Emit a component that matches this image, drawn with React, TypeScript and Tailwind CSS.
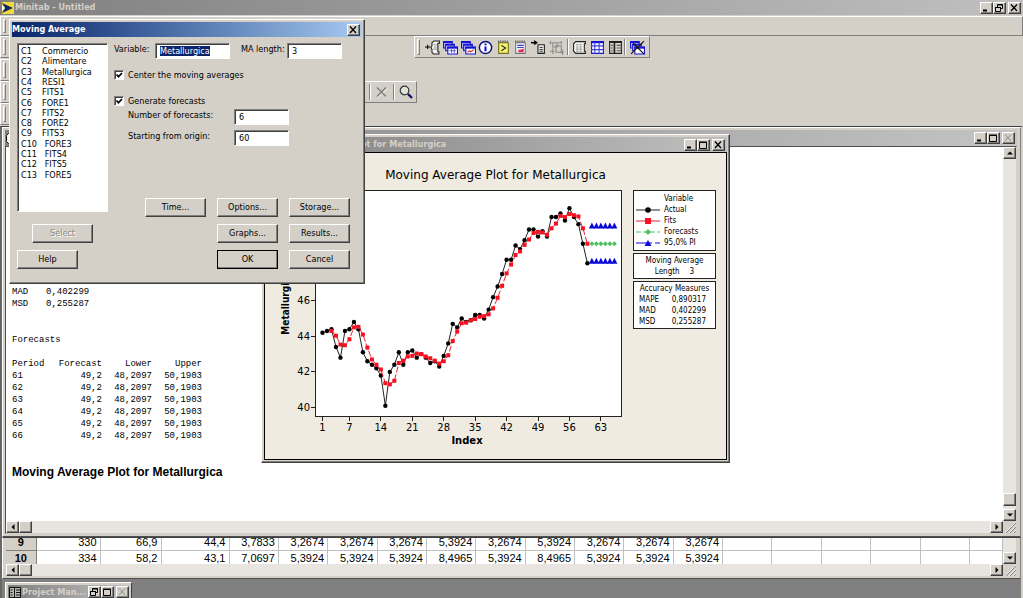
import React, { useEffect, useRef } from "react";

const raised =
  "border border-t-white border-l-white border-r-[#404040] border-b-[#404040] bg-[#d4d0c8] shadow-[inset_-1px_-1px_0_#808080]";
const sunken =
  "border border-t-[#808080] border-l-[#808080] border-r-white border-b-white bg-white shadow-[inset_1px_1px_0_#404040]";

/* ---------- window chrome ---------- */

type Glyph = "min" | "max" | "restore" | "close";

function CaptionButton({ kind, disabled = false }: { kind: Glyph; disabled?: boolean }) {
  const c = disabled ? "#8a8a86" : "#000";
  return (
    <button
      type="button"
      aria-label={kind}
      disabled={disabled}
      className={`flex h-3 w-[13px] shrink-0 items-center justify-center ${raised}`}
    >
      <svg width="9" height="8" viewBox="0 0 9 8" fill="none" stroke={c}>
        {kind === "min" && <path d="M1 6.5h4" strokeWidth="2" />}
        {kind === "max" && <path d="M.5 1.5h7v6h-7zM0 1h8" />}
        {kind === "restore" && <path d="M2.5 3V.5h5v4H6M2 1h6M.5 3.5h5v4h-5zM0 3.5h6" />}
        {kind === "close" && <path d="M1 .5l6 6.5M7 .5L1 7" strokeWidth={disabled ? 1 : 1.3} />}
      </svg>
    </button>
  );
}

function CaptionButtons({ kinds, disabledClose = false }: { kinds: Glyph[]; disabledClose?: boolean }) {
  return (
    <div className="ml-auto flex items-center">
      {kinds.map((k) => (
        <div key={k} className={k === "close" ? "ml-0.5" : ""}>
          <CaptionButton kind={k} disabled={k === "close" && disabledClose} />
        </div>
      ))}
    </div>
  );
}

const arrows = {
  up: "M0 4.5h6L3 1.5z",
  down: "M0 1.5h6L3 4.5z",
  left: "M4.5 0v6L1.5 3z",
  right: "M1.5 0v6L4.5 3z",
};

function ScrollButton({ dir }: { dir: keyof typeof arrows }) {
  return (
    <button
      type="button"
      aria-label={`Scroll ${dir}`}
      className={`flex h-3 w-[13px] shrink-0 items-center justify-center ${raised}`}
    >
      <svg width="6" height="6" viewBox="0 0 6 6">
        <path d={arrows[dir]} />
      </svg>
    </button>
  );
}

function HorizontalScroll() {
  return (
    <div className="flex h-3 shrink-0 bg-[#e8e5e0]">
      <ScrollButton dir="left" />
      <div className={`h-3 w-[13px] ${raised}`} />
      <div className="flex-1" />
      <ScrollButton dir="right" />
      <svg className="w-[13px] shrink-0 bg-[#d4d0c8]" height="12" viewBox="0 0 13 12" fill="none">
        <path d="M3 12L13 2M7 12l6-6M11 12l2-2" stroke="#808080" />
        <path d="M2 12L13 1M6 12l7-7M10 12l3-3" stroke="#fff" strokeWidth=".7" />
      </svg>
    </div>
  );
}

/* ---------- toolbars ---------- */

function Grip() {
  return (
    <div className="my-0.5 w-[3px] shrink-0 border border-t-white border-l-white border-r-[#808080] border-b-[#808080]" />
  );
}

function Divider() {
  return <div className="my-0.5 w-0.5 border-l border-l-[#808080] border-r border-r-white" />;
}

function Tool({ label, children }: { label: string; children: React.ReactNode }) {
  return (
    <button type="button" aria-label={label} className="flex flex-1 items-center justify-center">
      <svg width="15" height="15" viewBox="0 0 14 14" fill="none" stroke="#222">
        {children}
      </svg>
    </button>
  );
}

const stack = (
  <>
    <path d="M.5 1.5h8v6h-8z" fill="#b8b8f0" stroke="#1414d0" />
    <path d="M0 2h9" stroke="#1414d0" strokeWidth="1.6" />
    <path d="M2.5 4h8v6h-8z" fill="#c8c8f4" stroke="#1414d0" />
    <path d="M2 4.500h9" stroke="#1414d0" strokeWidth="1.6" />
    <path d="M4.5 6.500h9v6.500h-9z" fill="#fff" stroke="#1414d0" />
    <path d="M4 7.200h10" stroke="#1414d0" strokeWidth="1.8" />
  </>
);

function MainTools() {
  return (
    <div className="ml-[74px] flex border border-t-white border-l-white border-r-[#808080] border-b-[#808080] pl-0.5 pr-0.5">
      <Grip />
      <div className="ml-1 flex w-[141px]">
        <Tool label="Session folder">
          <path d="M0 6.5h5M2.5 4.5v4" stroke="#000" />
          <path d="M6.5 2.5l2-1.5h5v2H12v8h1v2H8l-1.5-1.5v-3L5.5 7l1-1.5z" fill="#f4f4f0" stroke="#222" />
          <path d="M8 4.5h3M8 6.5h3M8 8.5h3" stroke="#999" />
        </Tool>
        <Tool label="Worksheets folder">
          {stack}
          <path d="M6 10h6M8 8.5V12M10.500 8.5V12" stroke="#1414d0" strokeWidth=".6" />
        </Tool>
        <Tool label="Graphs folder">
          {stack}
          <path d="M6 11.5l2-1.5 1 1 3-2" stroke="#d02020" />
        </Tool>
        <Tool label="Info">
          <circle cx="7" cy="7" r="5.7" fill="#fff" stroke="#10107a" strokeWidth="1.4" />
          <path d="M7 6v4.5M7 3.2v1.7" stroke="#1414e0" strokeWidth="2" />
        </Tool>
        <Tool label="History">
          <path d="M2.5 2.5h9v10h-9z" fill="#f4f470" stroke="#70701a" />
          <path d="M2 1.5h10" stroke="#555" strokeDasharray="1 1" strokeWidth="2" />
          <path d="M5 5l4 2.5L5 10" stroke="#222" />
        </Tool>
        <Tool label="Report pad">
          <path d="M2.5 2.5h9v10h-9z" fill="#f0f0f8" stroke="#777" />
          <path d="M2 1.5h10" stroke="#555" strokeDasharray="1 1" strokeWidth="2" />
          <path d="M4 5h6M4 7h6" stroke="#4040c0" />
          <path d="M5 11.500V9h2l3-1v3.500z" fill="#e03050" stroke="none" />
        </Tool>
        <Tool label="Related documents">
          <path d="M0 2.5h4" stroke="#000" strokeWidth="1.5" />
          <path d="M3 0l3.500 2.500L3 5z" fill="#000" stroke="none" />
          <path d="M6.5 4.5h6v8h-6z" fill="#e8e8e8" stroke="#222" />
          <path d="M8 7h3M8 9h3M8 11h3" stroke="#444" />
        </Tool>
        <Tool label="Design">
          <g stroke="#8a8a86">
            <path d="M3.5 2.500h4v4h-4zM6.500 5.500h5v6h-5z" />
            <path d="M.5 2.500h2M1.500 1v3M8 2.500h4M11.500 1v3M1 10.500h4M3.500 8v5M10 11.500h4M12.500 9v5" />
          </g>
        </Tool>
      </div>
      <div className="ml-0.5 flex">
        <Divider />
        <div className="ml-0.5 flex w-[53px]">
          <Tool label="Session window">
            <path d="M3.5 1.5h9v2h-1v7h1v2h-9l-2-2v-7z" fill="#f4f4f0" stroke="#222" />
            <path d="M4 4.5h6M4 6.5h6M4 8.5h6M4 10.5h6" stroke="#777" strokeDasharray="2 1" />
          </Tool>
          <Tool label="Worksheet window">
            <path d="M1.5 1.5h11v11h-11z" fill="#fff" stroke="#1414d0" />
            <path d="M1 2h12" stroke="#1414d0" strokeWidth="2" />
            <path d="M1 5.5h12M1 9h12M4.5 2v11M8.5 2v11" stroke="#3a3ae0" />
          </Tool>
          <Tool label="Project manager">
            <path d="M1.5 1.5h11v11h-11z" fill="#d8d8d0" stroke="#222" />
            <path d="M1 2h12M6 2v11" stroke="#222" strokeWidth="1.6" />
            <path d="M2.5 5h2M2.5 7.5h2M2.5 10h2M8 5h4M8 7.5h4M8 10h4" stroke="#555" />
          </Tool>
        </div>
      </div>
      <div className="flex">
        <Divider />
        <div className="ml-px flex w-[20px]">
          <Tool label="Close all graphs">
            {stack}
            <path d="M1 13L13 1M3 3l10 10" stroke="#111" strokeWidth="1.1" />
          </Tool>
        </div>
      </div>
    </div>
  );
}

const dock = "flex h-full border border-t-white border-l-white border-r-[#808080] border-b-[#808080] pl-0.5";

function ToolbarArea() {
  return (
    <div className="flex h-[90px] shrink-0 flex-col">
      <div className="flex h-[22px]">
        <div className={`${dock} w-[340px]`}>
          <Grip />
        </div>
        <MainTools />
      </div>
      <div className="h-[23px] pt-px">
        <div className={`${dock} w-[340px]`}>
          <Grip />
        </div>
      </div>
      <div className="h-[22px]">
        <div className={`${dock} w-[417px]`}>
          <Grip />
          <div className="ml-auto flex">
            <Divider />
            <button type="button" aria-label="Delete" className="flex w-[22px] items-center justify-center">
              <svg width="12" height="11" viewBox="0 0 12 11" fill="none">
                <path d="M2 1.5l9 9M11 1.5l-9 9" stroke="#fff" />
                <path d="M1 .5l9 9M10 .5l-9 9" stroke="#77756f" strokeWidth="1.2" />
              </svg>
            </button>
            <Divider />
            <button type="button" aria-label="Find" className="flex w-[21px] items-center justify-center">
              <svg width="14" height="14" viewBox="0 0 14 14" fill="none">
                <circle cx="5.5" cy="5.5" r="4.3" fill="#dfe3da" stroke="#333" strokeWidth="1.2" />
                <path d="M9 9l4 4" stroke="#10106a" strokeWidth="2.4" />
              </svg>
            </button>
          </div>
        </div>
      </div>
      <div className="h-[22px]">
        <div className={`${dock} w-[340px]`}>
          <Grip />
        </div>
      </div>
    </div>
  );
}

/* ---------- session window ---------- */

const forecasts = [61, 62, 63, 64, 65, 66];

function SessionWindow() {
  return (
    <section className="flex min-h-0 flex-1 flex-col border border-t-white border-l-white border-r-[#808080] border-b-[#505050] bg-[#d4d0c8] p-0.5 pr-[3px]">
      <header className="flex h-4 shrink-0 items-center bg-linear-to-r from-[#808080] to-[#c4c4c4] pr-0.5">
        <svg width="13" height="13" viewBox="0 0 13 13" fill="none" stroke="#111">
          <path d="M3.5 1.5h7v10h-7l-2-2v-6z" fill="#f4f4f0" />
        </svg>
        <CaptionButtons kinds={["min", "max", "close"]} disabledClose />
      </header>
      <div className="flex min-h-0 flex-1 flex-col border border-t-[#505050] border-l-[#505050] border-r-transparent border-b-transparent">
        <div className="flex min-h-0 flex-1 bg-white">
          <div className="min-w-0 flex-1 overflow-hidden pl-1.5 pt-[139px] font-['Liberation_Mono',monospace] text-[9px] leading-3 text-black">
            <dl className="grid grid-cols-[34px_1fr]">
              <dt>MAD</dt>
              <dd>0,402299</dd>
              <dt>MSD</dt>
              <dd>0,255287</dd>
            </dl>
            <h3 className="mt-6">Forecasts</h3>
            <table className="mt-3 w-[190px] table-fixed text-right">
              <thead>
                <tr>
                  <th className="w-10 p-0 text-left font-normal">Period</th>
                  <th className="w-[50px] p-0 font-normal">Forecast</th>
                  <th className="w-[50px] p-0 font-normal">Lower</th>
                  <th className="w-[50px] p-0 font-normal">Upper</th>
                </tr>
              </thead>
              <tbody>
                {forecasts.map((p) => (
                  <tr key={p}>
                    <td className="p-0 text-left">{p}</td>
                    <td className="p-0">49,2</td>
                    <td className="p-0">48,2097</td>
                    <td className="p-0">50,1903</td>
                  </tr>
                ))}
              </tbody>
            </table>
            <h2 className="mt-6 font-['Liberation_Sans',sans-serif] text-[12px] font-bold">
              Moving Average Plot for Metallurgica
            </h2>
          </div>
          <div className="flex w-[13px] shrink-0 flex-col bg-[#e8e5e0]">
            <ScrollButton dir="up" />
            <div className="flex-1" />
            <div className={`mb-[3px] h-[13px] ${raised}`} />
            <ScrollButton dir="down" />
          </div>
        </div>
        <HorizontalScroll />
      </div>
    </section>
  );
}

/* ---------- worksheet ---------- */

const sheet = [
  { n: 9, cells: ["330", "66,9", "44,4", "3,7833", "3,2674", "3,2674", "3,2674", "5,3924", "3,2674", "5,3924", "3,2674", "3,2674", "3,2674"] },
  { n: 10, cells: ["334", "58,2", "43,1", "7,0697", "5,3924", "5,3924", "5,3924", "8,4965", "5,3924", "8,4965", "5,3924", "5,3924", "5,3924"] },
];
const blanks = [0, 1, 2, 3, 4, 5];

function WorksheetWindow() {
  return (
    <section className="flex h-[42px] shrink-0 flex-col border border-t-[#404040] border-l-white border-r-[#808080] border-b-[#505050] bg-[#d4d0c8] pb-0.5 pl-[3px] pr-1">
      <div className="flex min-h-0 flex-1 bg-white">
        <div className="flex min-w-0 flex-1 items-center overflow-hidden">
          <table className="w-full table-fixed border-collapse font-['Liberation_Sans',sans-serif] text-[11px] leading-[15px] text-black">
            <colgroup>
              <col className="w-[30px]" />
              <col className="w-16" />
              <col className="w-[61px]" />
              <col className="w-[68px]" />
              <col span={15} />
              <col className="w-[33px]" />
            </colgroup>
            <tbody>
              {sheet.map((r) => (
                <tr key={r.n}>
                  <th className="border-b border-r border-[#808080] bg-[#d4d0c8] p-0 text-center font-bold">{r.n}</th>
                  {r.cells.map((c, i) => (
                    <td key={i} className="border-b border-r border-[#c0c0c0] p-0 pr-[3px] text-right">
                      {c}
                    </td>
                  ))}
                  {blanks.map((b) => (
                    <td key={b} className="border-b border-r border-[#c0c0c0] p-0" />
                  ))}
                </tr>
              ))}
            </tbody>
          </table>
        </div>
        <div className="flex w-[13px] shrink-0 flex-col justify-end bg-[#e8e5e0]">
          <ScrollButton dir="down" />
        </div>
      </div>
      <HorizontalScroll />
    </section>
  );
}

/* ---------- graph window ---------- */

const actual = [
  44.2, 44.3, 44.4, 43.4, 42.8, 44.3, 44.4, 44.8, 44.4, 43.1, 42.6, 42.4, 42.2, 41.8, 40.1, 42.0, 42.4, 43.1, 42.4, 43.1,
  43.2, 42.8, 43.0, 42.8, 42.5, 42.6, 42.3, 42.9, 43.6, 44.7, 44.5, 45.0, 44.8, 44.9, 45.2, 45.2, 45.0, 45.5, 46.2, 46.8,
  47.5, 48.3, 48.3, 49.1, 48.9, 49.4, 50.0, 50.0, 49.6, 49.9, 49.6, 50.7, 50.7, 50.9, 50.5, 51.2, 50.7, 50.3, 49.2, 48.1,
];
const fits = actual.slice(2).map((v, i) => ({ t: i + 3, v: (v + actual[i + 1] + actual[i]) / 3 }));

const px = (t: number) => 45.5 + (t - 1) * 4.49;
const py = (v: number) => 220.5 - (v - 40) * 17.8;

function Plot() {
  return (
    <svg
      width="348"
      height="263"
      viewBox="0 0 348 263"
      className="shrink-0 font-['DejaVu_Sans',sans-serif] text-[10px]"
      role="img"
      aria-label="Metallurgica by index"
    >
      <rect x="38.5" y="3.5" width="306" height="226" fill="#fff" stroke="#222" />
      {[40, 42, 44, 46].map((v) => (
        <g key={v}>
          <path d={`M34 ${Math.floor(py(v)) + 0.5}h4`} stroke="#222" />
          <text x="33" y={Math.floor(py(v)) + 4} textAnchor="end">
            {v}
          </text>
        </g>
      ))}
      {[1, 7, 14, 21, 28, 35, 42, 49, 56, 63].map((t) => (
        <g key={t}>
          <path d={`M${Math.floor(px(t)) + 0.5} 230v4`} stroke="#222" />
          <text x={px(t)} y="244" textAnchor="middle">
            {t}
          </text>
        </g>
      ))}
      <text x="190" y="257" textAnchor="middle" className="font-['DejaVu_Sans',sans-serif] font-bold">
        Index
      </text>
      <text
        transform="translate(12 116) rotate(-90)"
        textAnchor="middle"
        className="font-['DejaVu_Sans_Condensed',sans-serif] font-bold"
      >
        Metallurgica
      </text>
      <polyline points={actual.map((v, i) => `${px(i + 1)},${py(v)}`).join(" ")} fill="none" stroke="#222" />
      {actual.map((v, i) => (
        <circle key={i} cx={px(i + 1)} cy={py(v)} r="2.2" />
      ))}
      <polyline
        points={fits.map((f) => `${px(f.t)},${py(f.v)}`).join(" ")}
        fill="none"
        stroke="#e8203a"
        strokeDasharray="6 2"
      />
      {fits.map((f) => (
        <rect key={f.t} x={px(f.t) - 2} y={py(f.v) - 2} width="4" height="4" fill="#f81020" />
      ))}
      {forecasts.map((t) => (
        <g key={t}>
          <path d={`M${px(t)} ${py(49.2) - 2.5}l2.5 2.5l-2.5 2.5l-2.5-2.5z`} fill="#4fc060" />
          <path d={`M${px(t) - 3} ${py(50.19) + 2.5}h6l-3-6z`} fill="#0808d8" />
          <path d={`M${px(t) - 3} ${py(48.21) + 2.5}h6l-3-6z`} fill="#0808d8" />
        </g>
      ))}
    </svg>
  );
}

const legend = [
  { name: "Actual", color: "#222", dash: "", mark: <circle cx="12" cy="5" r="2.8" fill="#000" /> },
  { name: "Fits", color: "#e8203a", dash: "", mark: <rect x="9" y="2" width="6" height="6" fill="#f81020" /> },
  { name: "Forecasts", color: "#4fc060", dash: "5 2", mark: <path d="M12 2l3 3l-3 3l-3-3z" fill="#4fc060" /> },
  { name: "95,0% PI", color: "#0808d8", dash: "16 3", mark: <path d="M8.5 8h7L12 2z" fill="#0808d8" /> },
];

function GraphWindow() {
  return (
    <section className="absolute left-[261px] top-[134px] w-[469px] border border-t-white border-l-white border-r-[#404040] border-b-[#404040] bg-[#d4d0c8] p-0.5 shadow-[inset_-1px_-1px_0_#808080]">
      <header className="flex h-[15px] items-center bg-linear-to-r from-[#808080] to-[#c0c0c0] pr-0.5 font-bold text-[#d4d0c8]">
        <svg width="12" height="11" viewBox="0 0 12 11" fill="none" stroke="#1414d0">
          <path d="M.5.5h10v9H.5z" fill="#fff" />
        </svg>
        <h2>Moving Average Plot for Metallurgica</h2>
        <CaptionButtons kinds={["min", "max", "close"]} />
      </header>
      <div className="border border-black bg-[#efebe0] pb-[9px] pl-3 pt-4 text-black">
        <h3 className="pr-3 text-center font-['DejaVu_Sans',sans-serif] text-[12px] leading-[13px]">
          Moving Average Plot for Metallurgica
        </h3>
        <div className="mt-[5px] flex gap-2">
          <Plot />
          <div className="flex w-[83px] flex-col gap-0.5 pt-[3px] text-[8px] leading-[11px]">
            <div className="border border-[#222] bg-white py-0.5 pl-0.5">
              <div className="pl-7">Variable</div>
              {legend.map((l) => (
                <div key={l.name} className="flex items-center gap-1">
                  <svg width="24" height="10" viewBox="0 0 24 10" fill="none">
                    <path d="M0 5h24" stroke={l.color} strokeDasharray={l.dash} />
                    {l.mark}
                  </svg>
                  {l.name}
                </div>
              ))}
            </div>
            <div className="border border-[#222] bg-white py-px text-center">
              <div>Moving Average</div>
              <div className="flex justify-center gap-2.5">
                <span>Length</span>
                <span>3</span>
              </div>
            </div>
            <div className="border border-[#222] bg-white px-[5px] py-px">
              <div className="whitespace-nowrap text-center">Accuracy Measures</div>
              {[
                ["MAPE", "0,890317"],
                ["MAD", "0,402299"],
                ["MSD", "0,255287"],
              ].map(([k, v]) => (
                <div key={k} className="flex justify-between pr-1">
                  <span>{k}</span>
                  <span>{v}</span>
                </div>
              ))}
            </div>
          </div>
        </div>
      </div>
    </section>
  );
}

/* ---------- dialog ---------- */

const columns = [
  "C1    Commercio",
  "C2    Alimentare",
  "C3    Metallurgica",
  "C4    RESI1",
  "C5    FITS1",
  "C6    FORE1",
  "C7    FITS2",
  "C8    FORE2",
  "C9    FITS3",
  "C10   FORE3",
  "C11   FITS4",
  "C12   FITS5",
  "C13   FORE5",
];

function DialogButton({ label, primary = false, disabled = false }: { label: string; primary?: boolean; disabled?: boolean }) {
  return (
    <button
      type="button"
      disabled={disabled}
      className={`h-[19px] w-[61px] ${raised} ${primary ? "outline-1 -outline-offset-1 outline-black" : ""} ${
        disabled ? "text-[#8a8a86] [text-shadow:1px_1px_0_#fff]" : ""
      }`}
    >
      {label}
    </button>
  );
}

function Check({ id, label }: { id: string; label: string }) {
  return (
    <div className="flex h-2.5 items-center gap-1">
      <span className="grid">
        <input
          id={id}
          type="checkbox"
          defaultChecked
          className={`peer col-start-1 row-start-1 size-2.5 appearance-none ${sunken}`}
        />
        <svg
          className="pointer-events-none col-start-1 row-start-1 hidden peer-checked:block"
          width="10"
          height="10"
          viewBox="0 0 10 10"
          fill="none"
        >
          <path d="M2.5 4.5l2 2.2L8 3" stroke="#000" strokeWidth="1.7" />
        </svg>
      </span>
      <label htmlFor={id}>{label}</label>
    </div>
  );
}

const field = `h-4 px-1 outline-none selection:bg-[#0a246a] selection:text-white ${sunken}`;

function MovingAverageDialog() {
  const variable = useRef<HTMLInputElement>(null);
  useEffect(() => {
    variable.current?.focus();
    variable.current?.select();
  }, []);

  return (
    <div
      role="dialog"
      aria-label="Moving Average"
      className="absolute left-[9px] top-[19px] w-[356px] border border-t-white border-l-white border-r-[#404040] border-b-[#404040] bg-[#d4d0c8] p-0.5 text-black shadow-[inset_-1px_-1px_0_#808080]"
    >
      <header className="flex h-[15px] items-center bg-linear-to-r from-[#0a246a] to-[#a6caf0] pr-0.5 font-bold text-white">
        <h2>Moving Average</h2>
        <CaptionButtons kinds={["close"]} />
      </header>
      <form className="flex flex-col pb-3 pl-[5px] pr-3 pt-1.5" onSubmit={(e) => e.preventDefault()}>
        <div className="flex gap-1.5">
          <ul role="listbox" aria-label="Columns" className={`grid h-[169px] w-[91px] shrink-0 auto-rows-fr pb-[31px] pl-[3px] pt-0.5 ${sunken}`}>
            {columns.map((c) => (
              <li key={c} role="option" aria-selected={false} className="whitespace-pre leading-[10px]">
                {c}
              </li>
            ))}
          </ul>
          <div className="flex flex-col items-start">
            <div className="flex">
              <label htmlFor="variable" className="w-[41px] leading-3">
                Variable:
              </label>
              <input id="variable" ref={variable} defaultValue="Metallurgica" className={`w-[75px] ${field}`} />
              <label htmlFor="length" className="ml-[11px] w-[46px] whitespace-nowrap leading-3">
                MA length:
              </label>
              <input id="length" defaultValue="3" className={`w-[55px] ${field}`} />
            </div>
            <div className="mt-[11px] flex flex-col gap-4">
              <Check id="center" label="Center the moving averages" />
              <Check id="generate" label="Generate forecasts" />
            </div>
            <div className="mt-[3px] grid grid-cols-[106px_55px] gap-y-[5px] pl-3.5">
              <label htmlFor="count" className="leading-3">
                Number of forecasts:
              </label>
              <input id="count" defaultValue="6" className={field} />
              <label htmlFor="origin" className="leading-3">
                Starting from origin:
              </label>
              <input id="origin" defaultValue="60" className={field} />
            </div>
          </div>
        </div>
        <div className="-mt-3.5 flex justify-end gap-[11px]">
          <DialogButton label="Time..." />
          <DialogButton label="Options..." />
          <DialogButton label="Storage..." />
        </div>
        <div className="mt-[7px] flex pl-[15px]">
          <DialogButton label="Select" disabled />
          <div className="ml-auto flex gap-[11px]">
            <DialogButton label="Graphs..." />
            <DialogButton label="Results..." />
          </div>
        </div>
        <div className="mt-[7px] flex">
          <DialogButton label="Help" />
          <div className="ml-auto flex gap-[11px]">
            <DialogButton label="OK" primary />
            <DialogButton label="Cancel" />
          </div>
        </div>
      </form>
    </div>
  );
}

/* ---------- application ---------- */

export default function App() {
  return (
    <main className="relative flex h-screen flex-col overflow-hidden bg-[#d4d0c8] font-['DejaVu_Sans_Condensed','DejaVu_Sans',sans-serif] text-[9px] leading-[11px] text-black">
      <header className="flex h-[15px] shrink-0 items-center bg-linear-to-r from-[#808080] to-[#c0c0c0] pl-0.5 pr-0.5 font-bold text-[#d4d0c8]">
        <svg width="12" height="12" viewBox="0 0 12 12" className="mr-px">
          <path d="M0 0h12v12H0z" fill="#f0d840" />
          <path d="M0 1l11 5-11 5 3-5z" fill="#10285a" />
          <path d="M0 3l3 3-3 3z" fill="#fff" />
        </svg>
        <h1>Minitab - Untitled</h1>
        <CaptionButtons kinds={["min", "restore", "close"]} />
      </header>
      <div className="mt-px flex h-5 shrink-0 border border-t-white border-l-white border-r-[#808080] border-b-[#808080] pl-0.5">
        <Grip />
      </div>
      <ToolbarArea />
      <div className="flex min-h-0 flex-1 flex-col border-l-2 border-r-2 border-t border-l-[#686868] border-r-[#d4d0c8] border-t-[#404040] bg-[#808080]">
        <SessionWindow />
        <WorksheetWindow />
        <div className="flex h-[19px] shrink-0 pl-[3px] pt-[3px]">
          <section className="flex h-5 w-[127px] border border-t-white border-l-white border-r-[#404040] border-b-[#404040] bg-[#d4d0c8] p-0.5">
            <header className="flex h-[14px] flex-1 items-center bg-linear-to-r from-[#808080] to-[#c0c0c0] font-bold text-[#d4d0c8]">
              <svg width="14" height="13" viewBox="0 0 14 13" fill="none" stroke="#111">
                <path d="M1.5 1.5h11v10h-11z" fill="#b8b8b0" />
                <path d="M6.5 2v10M2.5 4h2M2.5 6.5h2M2.5 9h2M8 4h4M8 6.5h4M8 9h4" />
              </svg>
              <span>Project Man...</span>
              <CaptionButtons kinds={["restore", "max", "close"]} disabledClose />
            </header>
          </section>
        </div>
      </div>
      <GraphWindow />
      <MovingAverageDialog />
    </main>
  );
}
